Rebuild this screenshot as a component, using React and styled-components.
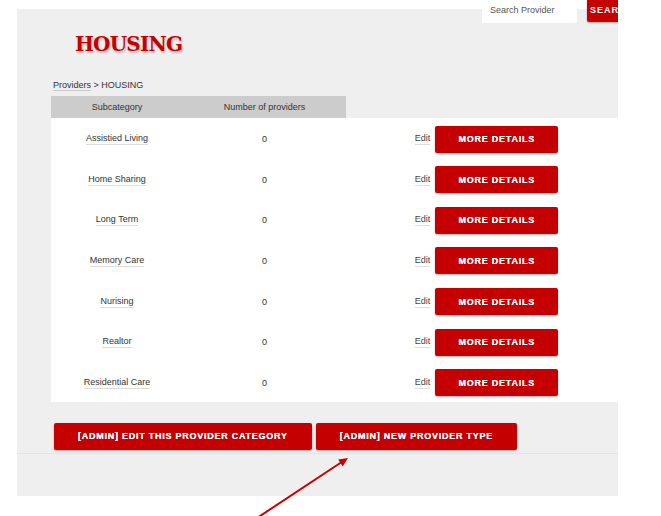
import React from "react";
import styled, { createGlobalStyle } from "styled-components";

const GlobalStyle = createGlobalStyle`
  html, body {
    margin: 0;
    padding: 0;
    background: #fff;
  }
  body {
    font-family: "Liberation Sans", Arial, sans-serif;
    color: #333;
  }
`;

const RED = "#c50000";

const Page = styled.div`
  position: relative;
  width: 661px;
  height: 516px;
  overflow: hidden;
  padding-left: 17px;
  box-sizing: border-box;
`;

const Shell = styled.div`
  width: 601px;
  height: 496px;
  overflow: hidden;
  background: linear-gradient(#fff 0 9px, #efefef 9px);
`;

const Frame = styled.div`
  width: 660px;
  display: flex;
  flex-direction: column;
`;

const TopBar = styled.div`
  display: flex;
  justify-content: flex-end;
  gap: 10px;
  height: 23px;
  padding-right: 30px;
`;

const SearchInput = styled.div`
  width: 95px;
  height: 23px;
  background: #fff;
  box-sizing: border-box;
  padding: 6px 0 0 8px;
  font-size: 9px;
  color: #555;
  line-height: 9px;
`;

const SearchButton = styled.div`
  width: 60px;
  height: 22px;
  background: ${RED};
  border-radius: 0 0 2px 2px;
  box-shadow: 0 1px 2px rgba(0, 0, 0, 0.3);
  color: #fff;
  font-weight: 700;
  font-size: 9px;
  letter-spacing: 1px;
  line-height: 9px;
  padding: 6px 0 0 3px;
  box-sizing: border-box;
`;

const Title = styled.h1`
  margin: 8px 0 0 58px;
  font-family: "DejaVu Serif", "Liberation Serif", serif;
  font-weight: 700;
  font-size: 20px;
  line-height: 26px;
  color: ${RED};
  letter-spacing: -0.8px;
  text-shadow: 1px 2px 2px rgba(0, 0, 0, 0.25);
`;

const Crumbs = styled.div`
  margin: 23px 0 0 36px;
  font-size: 9px;
  line-height: 11px;
  color: #333;
`;

const CrumbLink = styled.span`
  border-bottom: 1px solid #ccc;
`;

const Table = styled.div`
  margin: 5px 0 0 34px;
  width: 576px;
  display: grid;
  grid-template-columns: 132px 163px 281px;
`;

const HeadCell = styled.div`
  height: 22px;
  background: ${(p) => (p.$blank ? "transparent" : "#ccc")};
  display: flex;
  align-items: center;
  justify-content: center;
  font-size: 9px;
  color: #333;
`;

const Cell = styled.div`
  height: 40.57px;
  box-sizing: border-box;
  padding-top: 2px;
  background: #fff;
  display: flex;
  align-items: center;
  justify-content: center;
  font-size: 9px;
  color: #333;
  gap: 5px;
`;

const NameLink = styled.span`
  border-bottom: 1px solid #ddd;
  line-height: 11px;
`;

const EditLink = styled.span`
  border-bottom: 1px solid #ddd;
  line-height: 11px;
  color: #444;
`;

const RedButton = styled.div`
  height: 27px;
  width: ${(p) => p.$width || "auto"};
  padding: ${(p) => (p.$width ? "0" : "0 24px")};
  box-sizing: border-box;
  background: ${RED};
  border-radius: 2px;
  box-shadow: 0 1px 2px rgba(0, 0, 0, 0.3);
  display: flex;
  align-items: center;
  justify-content: center;
  color: #fff;
  font-weight: 700;
  font-size: 9px;
  letter-spacing: 0.75px;
  white-space: nowrap;
  text-shadow: 0 0 0.4px #fff;
`;

const Actions = styled.div`
  display: flex;
  gap: 4px;
  margin: 21px 0 0 37px;
`;

const Footer = styled.div`
  margin-top: 3px;
  border-top: 1px solid #e3e3e3;
  height: 42px;
`;

const Arrow = styled.svg`
  position: absolute;
  left: 0;
  top: 0;
  pointer-events: none;
`;

const rows = [
  "Assistied Living",
  "Home Sharing",
  "Long Term",
  "Memory Care",
  "Nurising",
  "Realtor",
  "Residential Care",
];

export default function App() {
  return (
    <>
      <GlobalStyle />
      <Page>
        <Shell>
          <Frame>
            <TopBar>
              <SearchInput>Search Provider</SearchInput>
              <SearchButton>SEARCH</SearchButton>
            </TopBar>
            <Title>HOUSING</Title>
            <Crumbs>
              <CrumbLink>Providers</CrumbLink> &gt; HOUSING
            </Crumbs>
            <Table>
              <HeadCell>Subcategory</HeadCell>
              <HeadCell>Number of providers</HeadCell>
              <HeadCell $blank />
              {rows.map((name) => (
                <React.Fragment key={name}>
                  <Cell>
                    <NameLink>{name}</NameLink>
                  </Cell>
                  <Cell>0</Cell>
                  <Cell>
                    <EditLink>Edit</EditLink>
                    <RedButton $width="123px">MORE DETAILS</RedButton>
                  </Cell>
                </React.Fragment>
              ))}
            </Table>
            <Actions>
              <RedButton>[ADMIN] EDIT THIS PROVIDER CATEGORY</RedButton>
              <RedButton>[ADMIN] NEW PROVIDER TYPE</RedButton>
            </Actions>
            <Footer />
          </Frame>
        </Shell>
        <Arrow width="661" height="516" viewBox="0 0 661 516">
          <line x1="254" y1="520" x2="341" y2="462.5" stroke="#c80000" strokeWidth="2" />
          <polygon points="348,458 342.7,466.6 338.2,459.6" fill="#c80000" />
        </Arrow>
      </Page>
    </>
  );
}
